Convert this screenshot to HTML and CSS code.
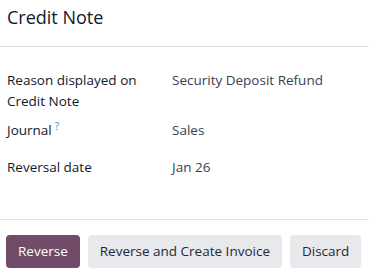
FILE: index.html
```html
<!DOCTYPE html>
<html lang="en">
<head>
<meta charset="utf-8">
<title>Credit Note</title>
<link rel="stylesheet" href="styles.css">
</head>
<body>
<div class="modal">
  <header class="modal-header">
    <h4 class="modal-title">Credit Note</h4>
  </header>
  <main class="modal-body">
    <div class="form-grid">
      <div class="row row-reason">
        <div class="label">Reason displayed on Credit Note</div>
        <div class="value">Security Deposit Refund</div>
      </div>
      <div class="row row-journal">
        <div class="label">Journal<sup class="help">?</sup></div>
        <div class="value">Sales</div>
      </div>
      <div class="row row-date">
        <div class="label">Reversal date</div>
        <div class="value">Jan 26</div>
      </div>
    </div>
  </main>
  <footer class="modal-footer">
    <button class="btn btn-primary">Reverse</button>
    <button class="btn btn-secondary">Reverse and Create Invoice</button>
    <button class="btn btn-secondary">Discard</button>
  </footer>
</div>
</body>
</html>
```
FILE: styles.css
```css
* { box-sizing: border-box; }
html, body {
  margin: 0;
  padding: 0;
  background: #ffffff;
}
body {
  width: 369px;
  height: 275px;
  overflow: hidden;
  font-family: "Open Sans", "Noto Sans", sans-serif;
  font-size: 13.5px;
  line-height: 21px;
  color: #374151;
}
.modal {
  display: flex;
  flex-direction: column;
}
.modal-header {
  height: 47px;
  border-bottom: 1px solid #dee2e6;
  padding: 5px 7px 0;
}
.modal-title {
  margin: 0;
  font-size: 18px;
  line-height: 24px;
  font-weight: 400;
  color: #111827;
}
.modal-body {
  padding: 23px 7px 0;
  height: 173px;
  border-bottom: 1px solid #dee2e6;
}
.row {
  display: grid;
  grid-template-columns: 165px 1fr;
}
.row-reason { height: 50px; }
.row-journal { height: 37px; }
.row-date { height: 21px; }
.label {
  color: #111827;
  width: 140px;
}
.help {
  color: #1f97d4;
  font-size: 10px;
  line-height: 0;
  margin-left: 3px;
  vertical-align: 5px;
}
.value {
  color: #374151;
}
.modal-footer {
  display: flex;
  gap: 8px;
  padding: 15px 6px 0;
}
.btn {
  font: inherit;
  height: 33px;
  border: none;
  border-radius: 4px;
  padding: 0 12px;
  cursor: pointer;
}
.btn-primary {
  background: #714b67;
  color: #ffffff;
}
.btn-secondary {
  background: #e7e9ed;
  color: #1f2937;
}
```
